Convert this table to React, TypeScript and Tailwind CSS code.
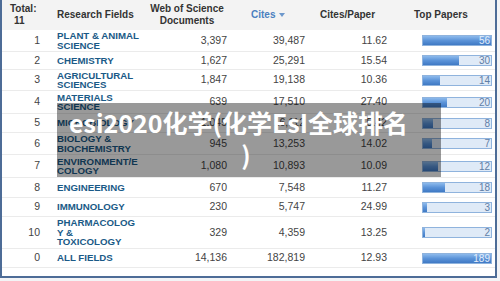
import React from 'react'

type Row = {
  rank: number
  field: string[]
  docs: string
  cites: string
  cpp: string
  top: number
  max: number
  h: string
}

const rows: Row[] = [
  { rank: 1, field: ['PLANT & ANIMAL', 'SCIENCE'], docs: '3,397', cites: '39,487', cpp: '11.62', top: 56, max: 56, h: 'h-[22px]' },
  { rank: 2, field: ['CHEMISTRY'], docs: '1,627', cites: '25,291', cpp: '15.54', top: 30, max: 56, h: 'h-[18px]' },
  { rank: 3, field: ['AGRICULTURAL', 'SCIENCES'], docs: '1,847', cites: '19,138', cpp: '10.36', top: 14, max: 56, h: 'h-[21px]' },
  { rank: 4, field: ['MATERIALS', 'SCIENCE'], docs: '639', cites: '17,510', cpp: '27.40', top: 20, max: 56, h: 'h-[23px]' },
  { rank: 5, field: ['MICROBIOLOGY'], docs: '1,045', cites: '16,112', cpp: '15.42', top: 8, max: 56, h: 'h-[19px]' },
  { rank: 6, field: ['BIOLOGY &', 'BIOCHEMISTRY'], docs: '945', cites: '13,253', cpp: '14.02', top: 7, max: 56, h: 'h-[22px]' },
  { rank: 7, field: ['ENVIRONMENT/E', 'COLOGY'], docs: '1,080', cites: '10,893', cpp: '10.09', top: 12, max: 56, h: 'h-[23px]' },
  { rank: 8, field: ['ENGINEERING'], docs: '670', cites: '7,548', cpp: '11.27', top: 18, max: 56, h: 'h-[20px]' },
  { rank: 9, field: ['IMMUNOLOGY'], docs: '230', cites: '5,747', cpp: '24.99', top: 3, max: 56, h: 'h-[19px]' },
  { rank: 10, field: ['PHARMACOLOG', 'Y &', 'TOXICOLOGY'], docs: '329', cites: '4,359', cpp: '13.25', top: 2, max: 56, h: 'h-[32px]' },
  { rank: 0, field: ['ALL FIELDS'], docs: '14,136', cites: '182,819', cpp: '12.93', top: 189, max: 189, h: 'h-[19px]' },
]

function Bar({ value, max }: { value: number; max: number }) {
  const full = value >= max
  return (
    <div className="relative h-[11px] w-[70px] border border-[#8fb3dd] bg-[#dfeaf7]">
      <div
        className="absolute inset-y-0 left-0 bg-linear-to-b from-[#8dbaec] via-[#5b93d8] to-[#3f79c4]"
        style={{ width: `${(value / max) * 100}%` }}
      />
      <span
        className={`relative block pr-[1px] text-right text-[10px] leading-[9px] ${full ? 'text-[#e4eefa]' : 'text-[#5f7ea6]'}`}
      >
        {value}
      </span>
    </div>
  )
}

export default function App() {
  return (
    <div className="relative h-[281px] w-[500px] overflow-hidden bg-[#f3f4f6] font-['Liberation_Sans',Arial,sans-serif]">
      <div className="h-[278px] w-[497px] border-b-2 border-l-2 border-r-2 border-[#4d6c97] bg-white">
        {/* header */}
        <div className="flex h-[30px] bg-[#f3f3f3] text-[10px] font-bold leading-[12px] text-[#333]">
          <div className="w-[45px] pl-[8px] pt-[3px]">
            <div>Total:</div>
            <div className="pl-[4px]">11</div>
          </div>
          <div className="w-[100px] pl-[10px] pt-[9px]">Research Fields</div>
          <div className="w-[88px] pr-[8px] pt-[3px] text-center">
            <div>Web of Science</div>
            <div>Documents</div>
          </div>
          <div className="flex w-[78px] items-start gap-[4px] pl-[16px] pt-[9px] text-[#4a7fc0]">
            <span>Cites</span>
            <svg width="6" height="4" viewBox="0 0 6 4" className="mt-[4px]">
              <path d="M0 0h6L3 4z" fill="#6d98cc" />
            </svg>
          </div>
          <div className="w-[82px] pl-[7px] pt-[9px]">Cites/Paper</div>
          <div className="flex-1 pl-[19px] pt-[9px]">Top Papers</div>
        </div>

        {/* rows */}
        {rows.map((r) => (
          <div key={r.rank} className={`flex items-center border-b border-[#ebebeb] text-[10.5px] text-[#444] ${r.h}`}>
            <div className="w-[45px] pr-[7px] text-right">{r.rank}</div>
            <div className="w-[100px] pl-[10px] text-[9.7px] font-bold leading-[9.5px] whitespace-nowrap text-[#1a5a87]">
              {r.field.map((line) => (
                <div key={line}>{line}</div>
              ))}
            </div>
            <div className="w-[88px] pr-[8px] text-right">{r.docs}</div>
            <div className="w-[78px] pr-[8px] text-right">{r.cites}</div>
            <div className="w-[82px] pr-[8px] text-right">{r.cpp}</div>
            <div className="flex-1 pl-[27px]">
              <Bar value={r.top} max={r.max} />
            </div>
          </div>
        ))}
      </div>

      {/* title band over the table */}
      <div className="absolute left-[57px] top-[103px] h-[74px] w-[384px] bg-black/40 pt-[3px] font-['Noto_Sans_CJK_SC',sans-serif] text-[25px] font-bold leading-[32px] text-white">
        <div className="pl-[12px] whitespace-nowrap">esi2020化学(化学EsI全球排名</div>
        <div className="pr-[6px] text-center">)</div>
      </div>
    </div>
  )
}
